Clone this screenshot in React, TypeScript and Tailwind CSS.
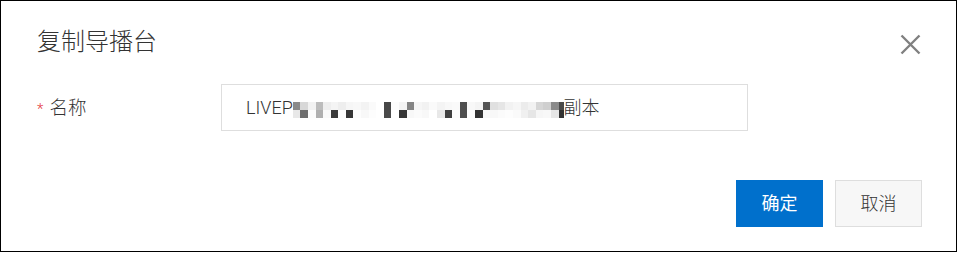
import React from 'react';

// mosaic columns of the redacted name: [top row, bottom row]
const mosaic: [string, string][] = [
  ['bg-[#8a8a8a]', 'bg-[#e8e8e8]'],
  ['bg-[#d8d8d8]', 'bg-[#6e6e6e]'],
  ['bg-[#f2f2f2]', 'bg-[#fcfcfc]'],
  ['bg-[#bcbcbc]', 'bg-[#b0b0b0]'],
  ['bg-[#eeeeee]', 'bg-[#fafafa]'],
  ['bg-[#f4f4f4]', 'bg-[#3a3a3a]'],
  ['bg-[#eeeeee]', 'bg-[#fcfcfc]'],
  ['bg-[#f6f6f6]', 'bg-[#363636]'],
  ['bg-[#f8f8f8]', 'bg-[#fdfdfd]'],
  ['bg-[#f3f3f3]', 'bg-[#f8f8f8]'],
  ['bg-[#fafafa]', 'bg-[#fdfdfd]'],
  ['bg-[#ffffff]', 'bg-[#ffffff]'],
  ['bg-[#474747]', 'bg-[#4a4a4a]'],
  ['bg-[#fcfcfc]', 'bg-[#ffffff]'],
  ['bg-[#f4f4f4]', 'bg-[#363636]'],
  ['bg-[#858585]', 'bg-[#f8f8f8]'],
  ['bg-[#f6f6f6]', 'bg-[#fbfbfb]'],
  ['bg-[#f2f2f2]', 'bg-[#f8f8f8]'],
  ['bg-[#fafafa]', 'bg-[#ffffff]'],
  ['bg-[#f4f4f4]', 'bg-[#e8e8e8]'],
  ['bg-[#f8f8f8]', 'bg-[#404040]'],
  ['bg-[#fafafa]', 'bg-[#fdfdfd]'],
  ['bg-[#4e4e4e]', 'bg-[#4e4e4e]'],
  ['bg-[#f8f8f8]', 'bg-[#fdfdfd]'],
  ['bg-[#f4f4f4]', 'bg-[#333333]'],
  ['bg-[#555555]', 'bg-[#f8f8f8]'],
  ['bg-[#e0e0e0]', 'bg-[#f8f8f8]'],
  ['bg-[#e6e6e6]', 'bg-[#fbfbfb]'],
  ['bg-[#f2f2f2]', 'bg-[#fdfdfd]'],
  ['bg-[#f6f6f6]', 'bg-[#fafafa]'],
  ['bg-[#ececec]', 'bg-[#f0f0f0]'],
  ['bg-[#f2f2f2]', 'bg-[#e6e6e6]'],
  ['bg-[#d6d6d6]', 'bg-[#f6f6f6]'],
  ['bg-[#cfcfcf]', 'bg-[#f8f8f8]'],
  ['bg-[#8a8a8a]', 'bg-[#e6e6e6]'],
];

const Mosaic = () => (
  <span className="flex mt-[5px]">
    {mosaic.map(([top, bottom], i) => (
      <span key={i} className="flex flex-col w-[7.6px]">
        <span className={`h-[8px] ${top}`} />
        <span className={`h-[8px] ${bottom}`} />
      </span>
    ))}
    <span className="flex flex-col w-[5px]">
      <span className="h-[8px] bg-[#4a4a4a]" />
      <span className="h-[8px] bg-[#333333]" />
    </span>
  </span>
);

export default function App() {
  return (
    <div className="w-[957px] h-[252px] border border-black bg-white relative text-[#333] font-light font-['Roboto','Noto_Sans_CJK_SC',sans-serif]">
      {/* header */}
      <div className="pl-[36px] pt-[25px]">
        <h2 className="text-[24px] leading-[32px] font-light">复制导播台</h2>
      </div>
      <button className="absolute right-[35px] top-[33px] w-[21px] h-[21px] text-[#808080]">
        <svg viewBox="0 0 21 21" className="w-full h-full" fill="none" stroke="currentColor" strokeWidth="2.4">
          <path d="M1.5 1.5 L19.5 19.5 M19.5 1.5 L1.5 19.5" />
        </svg>
      </button>

      {/* form */}
      <div className="flex items-center pl-[36px] mt-[26px]">
        <label className="w-[184px] flex items-center text-[18.5px] leading-[24px]">
          <span className="text-[#e4393c] text-[15px] mr-[6px] mt-[2px]">*</span>
          名称
        </label>
        <div className="w-[527px] h-[47px] border border-[#dedede] flex items-center pl-[24px] text-[18px] leading-[24px]">
          <span>LIVEP</span>
          <Mosaic />
          <span>副本</span>
        </div>
      </div>

      {/* footer */}
      <div className="flex justify-end gap-[12px] pr-[34px] mt-[49px]">
        <button className="w-[87px] h-[47px] bg-[#0070cc] text-white text-[18px] font-normal">确定</button>
        <button className="w-[87px] h-[47px] bg-[#f7f7f7] border border-[#dedede] text-[#333] text-[18px]">取消</button>
      </div>
    </div>
  );
}
